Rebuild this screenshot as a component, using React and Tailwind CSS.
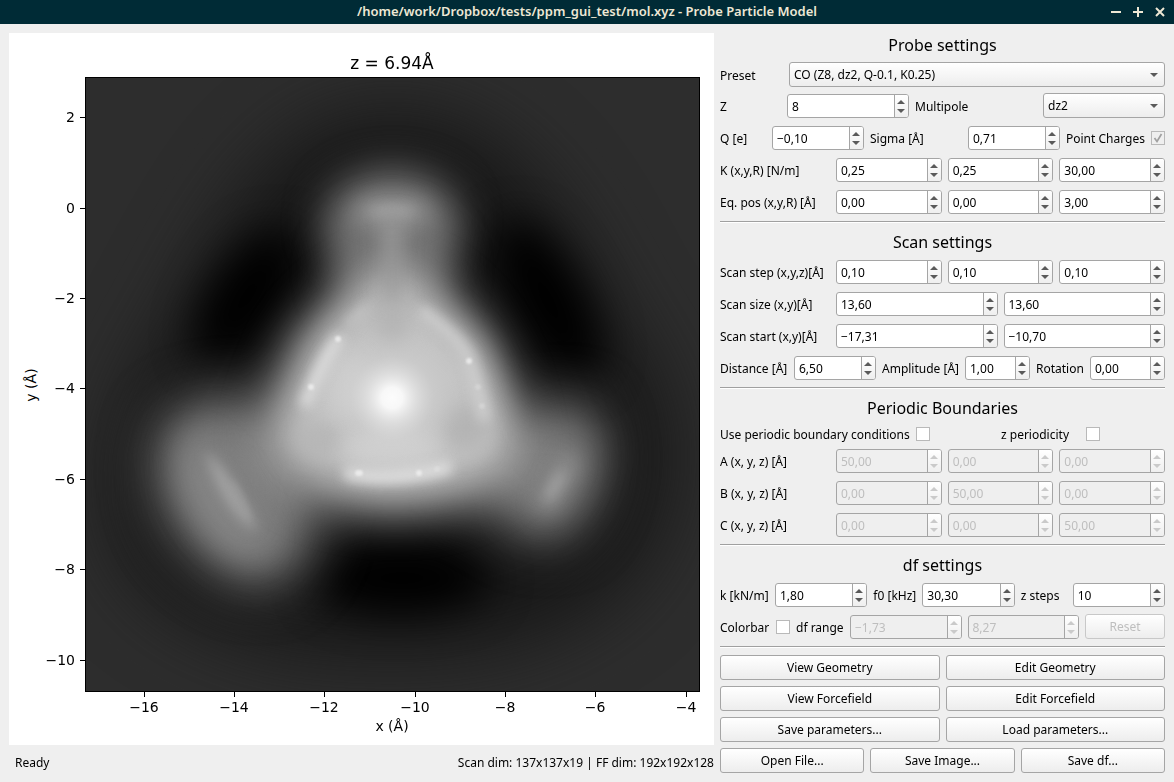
import { useState } from 'react';
import clsx from 'clsx';

const X_TICKS = [[-16, 144], [-14, 234], [-12, 324], [-10, 415], [-8, 505], [-6, 595], [-4, 686]];
const Y_TICKS = [[2, 117], [0, 208], [-2, 298], [-4, 388], [-6, 479], [-8, 569], [-10, 660]];

const fmt = (n) => String(n).replace('-', '−');

function Arrow({ up }) {
  return (
    <svg viewBox="0 0 8 4" className="h-1 w-2" fill="currentColor" aria-hidden="true">
      <path d={up ? 'M0 4 L4 0 L8 4 Z' : 'M0 0 L8 0 L4 4 Z'} />
    </svg>
  );
}

function WindowIcon({ d }) {
  return (
    <svg viewBox="0 0 10 10" className="size-[10px]" fill="none" stroke="currentColor" strokeWidth="2" aria-hidden="true">
      <path d={d} />
    </svg>
  );
}

function Spin({ id, label, value, disabled }) {
  const [text, setText] = useState(value);
  const step = (dir) => {
    const digits = text.includes(',') ? 2 : 0;
    const next = parseFloat(text.replace('−', '-').replace(',', '.')) + dir * (digits ? 0.1 : 1);
    setText(next.toFixed(digits).replace('-', '−').replace('.', ','));
  };

  return (
    <div
      className={clsx(
        'flex h-6 min-w-0 overflow-hidden rounded-[3px] border border-[#a5a5a5]',
        disabled ? 'bg-[#efefef] text-[#bebebe]' : 'bg-white text-black'
      )}
    >
      <input
        id={id}
        aria-label={label}
        type="text"
        value={text}
        disabled={disabled}
        onChange={(e) => setText(e.target.value)}
        className="w-full min-w-0 flex-1 bg-transparent pt-[2px] pl-1 outline-none"
      />
      <div
        className={clsx(
          'flex w-[14px] shrink-0 flex-col border-l border-[#a5a5a5] bg-linear-to-b from-white to-[#efefef] pr-px',
          disabled ? 'text-[#cacaca]' : 'text-[#5a5a5a]'
        )}
      >
        <button type="button" aria-label="Increase" disabled={disabled} onClick={() => step(1)} className="flex flex-1 items-end justify-center pb-[2px]">
          <Arrow up />
        </button>
        <button type="button" aria-label="Decrease" disabled={disabled} onClick={() => step(-1)} className="flex flex-1 items-start justify-center pt-[3px]">
          <Arrow />
        </button>
      </div>
    </div>
  );
}

function Combo({ id, options }) {
  return (
    <div className="relative h-[25px] self-end">
      <select id={id} className="h-full w-full appearance-none rounded-[3px] border border-[#a5a5a5] bg-linear-to-b from-white to-[#ededed] pr-6 pl-1 outline-none">
        {options.map((o) => <option key={o}>{o}</option>)}
      </select>
      <span className="pointer-events-none absolute inset-y-0 right-[7px] flex items-center text-[#5a5a5a]">
        <Arrow />
      </span>
    </div>
  );
}

function Check({ id, checked: initial = false, disabled }) {
  const [checked, setChecked] = useState(initial);
  return (
    <span className="relative flex size-[14px]">
      <input
        id={id}
        type="checkbox"
        checked={checked}
        disabled={disabled}
        onChange={(e) => setChecked(e.target.checked)}
        className="size-[14px] appearance-none border border-[#b9b9b9] bg-white disabled:bg-[#efefef]"
      />
      {checked && (
        <svg viewBox="0 0 14 14" className="pointer-events-none absolute inset-0" fill="none" stroke="#a0a0a0" strokeWidth="1.7">
          <path d="M3.5 7 L6 10.5 L10.5 3" />
        </svg>
      )}
    </span>
  );
}

function PushButton({ children, disabled }) {
  return (
    <button
      type="button"
      disabled={disabled}
      className="h-[25px] self-end rounded-[3px] border border-[#a5a5a5] bg-linear-to-b from-white to-[#ededed] active:to-[#dddddd] disabled:border-[#c8c8c8] disabled:text-[#bebebe]"
    >
      {children}
    </button>
  );
}

function Section({ title, first, children }) {
  return (
    <section className={clsx('border-b border-[#a0a0a0] pb-[7px] shadow-[0_1px_0_#ffffff]', first ? 'pt-[9px]' : 'pt-2')}>
      <h2 className={clsx('text-center text-[16px] leading-6', first ? 'mb-[5px]' : 'mb-[6px]')}>{title}</h2>
      <div className="flex flex-col gap-2 [&_label]:pt-[2px]">{children}</div>
    </section>
  );
}

// One label followed by two or three values that share it
function VectorRow({ label, name, values, disabled }) {
  return (
    <div role="group" aria-label={label} className="grid grid-cols-[110px_1fr] items-center gap-[6px]">
      <label htmlFor={`${name}-0`} className="whitespace-nowrap">{label}</label>
      <div className={clsx('grid gap-[6px]', values.length === 3 ? 'grid-cols-3' : 'grid-cols-2')}>
        {values.map((v, i) => (
          <Spin key={i} id={`${name}-${i}`} label={`${label} ${i + 1}`} value={v} disabled={disabled} />
        ))}
      </div>
    </div>
  );
}

function ScanImage() {
  return (
    <g clipPath="url(#axes)">
      <rect x="85" y="77" width="615" height="615" fill="#2d2d2d" />

      {/* wide attractive halo */}
      <path d="M392 110 C515 110 570 220 620 320 C690 400 690 510 625 585 C555 650 460 658 390 658 C300 658 205 645 145 585 C88 520 105 420 165 330 C220 230 270 110 392 110 Z" fill="#181818" filter="url(#b36)" />

      {/* minima between the lobes */}
      <g fill="#000" filter="url(#b20)">
        <ellipse cx="247" cy="296" rx="76" ry="36" transform="rotate(-56 247 296)" />
        <ellipse cx="548" cy="300" rx="88" ry="36" transform="rotate(62 548 300)" />
        <ellipse cx="402" cy="578" rx="88" ry="36" />
      </g>

      {/* outer lobes */}
      <ellipse cx="392" cy="222" rx="66" ry="50" fill="#7e7e7e" filter="url(#b20)" />
      <ellipse cx="392" cy="270" rx="56" ry="56" fill="#747474" filter="url(#b20)" />
      <path d="M186 412 C230 386 300 400 322 460 C322 530 300 578 262 584 C210 574 170 530 162 490 C154 450 160 424 186 412 Z" fill="#7c7c7c" filter="url(#b28)" />
      <ellipse cx="232" cy="492" rx="40" ry="76" transform="rotate(-30 232 492)" fill="#7c7c7c" filter="url(#b20)" />
      <path d="M480 420 L576 404 C608 436 600 484 580 514 C560 546 528 540 506 516 L450 490 Z" fill="#7e7e7e" filter="url(#b28)" />
      <ellipse cx="556" cy="474" rx="26" ry="52" transform="rotate(26 556 474)" fill="#7c7c7c" filter="url(#b20)" />

      {/* central plateau */}
      <path d="M392 262 C430 270 486 318 502 364 C516 396 524 440 526 458 C494 498 440 514 392 514 C345 514 288 494 260 455 C260 420 275 380 295 338 C318 306 360 270 392 262 Z" fill="#a2a2a2" filter="url(#b20)" />
      <path d="M392 276 L332 332 C310 365 292 406 288 436 C298 462 335 482 392 484 C440 484 484 470 504 452 C500 410 490 372 474 346 Z" fill="#bcbcbc" filter="url(#b16)" />
      <path d="M392 300 L342 345 C325 370 312 400 306 426 C316 450 342 468 392 470 C436 470 468 462 488 444 C484 410 478 380 462 356 Z" fill="#c4c4c4" filter="url(#b10)" />
      <ellipse cx="392" cy="316" rx="20" ry="30" fill="#b5b5b5" filter="url(#b10)" />
      <ellipse cx="318" cy="440" rx="24" ry="18" fill="#b6b6b6" filter="url(#b10)" />
      <ellipse cx="466" cy="428" rx="24" ry="24" fill="#b4b4b4" filter="url(#b10)" />
      <ellipse cx="392" cy="450" rx="48" ry="20" fill="#cecece" filter="url(#b10)" />
      <ellipse cx="346" cy="385" rx="22" ry="32" fill="#cbcbcb" filter="url(#b10)" />

      {/* plateau rims */}
      <g fill="none" strokeLinecap="round" filter="url(#b6)">
        <path d="M366 308 L350 324" stroke="#c4c4c4" strokeWidth="9" />
        <path d="M338 340 C322 362 312 388 306 402" stroke="#dcdcdc" strokeWidth="12" />
        <path d="M424 312 C444 328 458 338 468 356 C475 378 480 396 484 416" stroke="#cfcfcf" strokeWidth="11" />
        <path d="M350 474 C375 479 410 478 446 468" stroke="#dedede" strokeWidth="13" />
      </g>

      {/* ridges on the lobes */}
      <ellipse cx="392" cy="212" rx="36" ry="14" fill="#929292" filter="url(#b10)" />
      <ellipse cx="392" cy="211" rx="22" ry="4" fill="#a6a6a6" filter="url(#b6)" />
      <path d="M392 216 L392 300" stroke="#9a9a9a" strokeWidth="18" filter="url(#b10)" />
      <path d="M186 440 C225 450 245 490 260 530 C262 548 256 556 246 552 C220 545 196 516 186 480 Z" fill="#8a8a8a" fillOpacity="0.7" filter="url(#b16)" />
      <path d="M206 452 C230 472 245 500 257 530 C238 524 215 490 206 452 Z" fill="#a2a2a2" filter="url(#b6)" />
      <path d="M232 482 C240 494 245 506 249 518" fill="none" stroke="#a4a4a4" strokeWidth="4" strokeOpacity="0.5" filter="url(#b3)" />
      <path d="M571 458 L543 508" stroke="#969696" strokeWidth="16" filter="url(#b10)" />
      <path d="M562 474 L548 498" stroke="#a6a6a6" strokeWidth="7" filter="url(#b6)" />

      {/* centre peak and relaxation artefacts */}
      <circle cx="392" cy="398" r="70" fill="url(#peak)" />
      <g fill="#f0f0f0" fillOpacity="0.8" filter="url(#b1)">
        <circle cx="338" cy="339" r="3" />
        <circle cx="311" cy="387" r="3" />
        <circle cx="469" cy="361" r="3" />
        <ellipse cx="359" cy="473" rx="4" ry="3" />
        <ellipse cx="419" cy="473" rx="3" ry="3" />
        <circle cx="437" cy="469" r="3" fillOpacity="0.3" />
        <circle cx="478" cy="387" r="3" fillOpacity="0.3" />
        <circle cx="482" cy="406" r="3" fillOpacity="0.3" />
      </g>
    </g>
  );
}

function Plot() {
  return (
    <svg viewBox="9 33 705 712" className="block h-auto w-full bg-white" role="img" aria-label="Frequency shift map" fontFamily="'DejaVu Sans', sans-serif" fontSize="14">
      <defs>
        <clipPath id="axes"><rect x="85" y="77" width="615" height="615" /></clipPath>
        {[1, 3, 6, 10, 16, 20, 28, 36].map((s) => (
          <filter key={s} id={`b${s}`} x="85" y="77" width="615" height="615" filterUnits="userSpaceOnUse" colorInterpolationFilters="sRGB">
            <feGaussianBlur stdDeviation={s} />
          </filter>
        ))}
        <radialGradient id="peak">
          <stop offset="0" stopColor="#fcfcfc" />
          <stop offset="0.15" stopColor="#f9f9f9" stopOpacity="0.97" />
          <stop offset="0.35" stopColor="#e8e8e8" stopOpacity="0.7" />
          <stop offset="0.6" stopColor="#d8d8d8" stopOpacity="0.3" />
          <stop offset="1" stopColor="#cccccc" stopOpacity="0" />
        </radialGradient>
      </defs>

      <ScanImage />
      <rect x="85.5" y="77.5" width="614" height="614" fill="none" stroke="#000" />

      <g stroke="#000">
        {X_TICKS.map(([v, x]) => <path key={v} d={`M${x + 0.5} 692 v5`} />)}
        {Y_TICKS.map(([v, y]) => <path key={v} d={`M80 ${y + 0.5} h5`} />)}
      </g>
      <g textAnchor="middle">
        {X_TICKS.map(([v, x]) => <text key={v} x={x} y="712">{fmt(v)}</text>)}
        <text x="392" y="69" fontSize="17">z = 6.94Å</text>
        <text x="392" y="731">x (Å)</text>
        <text transform="translate(36 385) rotate(-90)">y (Å)</text>
      </g>
      <g textAnchor="end">
        {Y_TICKS.map(([v, y]) => <text key={v} x="75" y={y + 5}>{fmt(v)}</text>)}
      </g>
    </svg>
  );
}

export default function App() {
  return (
    <div className="flex min-h-screen flex-col bg-[#efefef] font-['Noto_Sans',sans-serif] text-[12px] text-black">
      <header className="relative flex h-6 items-center justify-center bg-[#002b36] text-[#eee8d5]">
        <h1 className="text-[13px] font-semibold">/home/work/Dropbox/tests/ppm_gui_test/mol.xyz - Probe Particle Model</h1>
        <div className="absolute right-[9px] flex gap-3">
          <button type="button" aria-label="Minimize"><WindowIcon d="M0 5 H10" /></button>
          <button type="button" aria-label="Maximize"><WindowIcon d="M0 5 H10 M5 0 V10" /></button>
          <button type="button" aria-label="Close"><WindowIcon d="M1 1 L9 9 M9 1 L1 9" /></button>
        </div>
      </header>

      <main className="grid flex-1 grid-cols-[1fr_445px] gap-[6px] px-[9px]">
        <div className="min-w-0 pt-[9px]">
          <Plot />
          <footer className="flex h-9 items-center justify-between pl-[6px]">
            <span>Ready</span>
            <span>Scan dim: 137x137x19 | FF dim: 192x192x128</span>
          </footer>
        </div>

        <form onSubmit={(e) => e.preventDefault()}>
          <Section title="Probe settings" first>
            <div className="grid h-6 grid-cols-[63px_1fr] items-center gap-[6px]">
              <label htmlFor="preset">Preset</label>
              <Combo id="preset" options={['CO (Z8, dz2, Q-0.1, K0.25)', 'Xe (Z54, s, Q0.3, K0.25)']} />
            </div>
            <div className="grid grid-cols-[61px_1fr_122px_1fr] grid-rows-[24px] items-center gap-[6px]">
              <label htmlFor="z">Z</label>
              <Spin id="z" value="8" />
              <label htmlFor="multipole">Multipole</label>
              <Combo id="multipole" options={['dz2', 's', 'pz']} />
            </div>
            <div className="grid grid-cols-[46px_1fr_92px_1fr_79px_14px] items-center gap-[6px] whitespace-nowrap">
              <label htmlFor="q">Q [e]</label>
              <Spin id="q" value="−0,10" />
              <label htmlFor="sigma">Sigma [Å]</label>
              <Spin id="sigma" value="0,71" />
              <label htmlFor="point-charges">Point Charges</label>
              <Check id="point-charges" checked disabled />
            </div>
            <VectorRow label="K (x,y,R) [N/m]" name="k" values={['0,25', '0,25', '30,00']} />
            <VectorRow label="Eq. pos (x,y,R) [Å]" name="eq" values={['0,00', '0,00', '3,00']} />
          </Section>

          <Section title="Scan settings">
            <VectorRow label="Scan step (x,y,z)[Å]" name="step" values={['0,10', '0,10', '0,10']} />
            <VectorRow label="Scan size (x,y)[Å]" name="size" values={['13,60', '13,60']} />
            <VectorRow label="Scan start (x,y)[Å]" name="start" values={['−17,31', '−10,70']} />
            <div className="grid grid-cols-[68px_82fr_77px_65fr_48px_75fr] items-center gap-[6px] whitespace-nowrap">
              <label htmlFor="distance">Distance [Å]</label>
              <Spin id="distance" value="6,50" />
              <label htmlFor="amplitude">Amplitude [Å]</label>
              <Spin id="amplitude" value="1,00" />
              <label htmlFor="rotation">Rotation</label>
              <Spin id="rotation" value="0,00" />
            </div>
          </Section>

          <Section title="Periodic Boundaries">
            <div className="-mt-[2px] grid h-[17px] grid-cols-[190px_79px_79px_1fr] items-center gap-[6px] whitespace-nowrap">
              <label htmlFor="pbc">Use periodic boundary conditions</label>
              <Check id="pbc" />
              <label htmlFor="pbcz">z periodicity</label>
              <Check id="pbcz" />
            </div>
            <VectorRow label="A (x, y, z) [Å]" name="a" values={['50,00', '0,00', '0,00']} disabled />
            <VectorRow label="B (x, y, z) [Å]" name="b" values={['0,00', '50,00', '0,00']} disabled />
            <VectorRow label="C (x, y, z) [Å]" name="c" values={['0,00', '0,00', '50,00']} disabled />
          </Section>

          <Section title="df settings">
            <div className="grid grid-cols-[49px_1fr_43px_1fr_46px_1fr] items-center gap-[6px] whitespace-nowrap">
              <label htmlFor="stiffness">k [kN/m]</label>
              <Spin id="stiffness" value="1,80" />
              <label htmlFor="f0">f0 [kHz]</label>
              <Spin id="f0" value="30,30" />
              <label htmlFor="zsteps">z steps</label>
              <Spin id="zsteps" value="10" />
            </div>
            <div className="grid grid-cols-[50px_14px_48px_1fr_1fr_80px] grid-rows-[24px] items-center gap-[6px] whitespace-nowrap">
              <label htmlFor="colorbar">Colorbar</label>
              <Check id="colorbar" />
              <label htmlFor="df-min">df range</label>
              <Spin id="df-min" value="−1,73" disabled />
              <Spin id="df-max" label="df range maximum" value="8,27" disabled />
              <PushButton disabled>Reset</PushButton>
            </div>
          </Section>

          <div className="flex flex-col gap-[6px] pt-2 pb-[9px]">
            <div className="grid grid-cols-2 gap-[6px]">
              <PushButton>View Geometry</PushButton>
              <PushButton>Edit Geometry</PushButton>
              <PushButton>View Forcefield</PushButton>
              <PushButton>Edit Forcefield</PushButton>
              <PushButton>Save parameters...</PushButton>
              <PushButton>Load parameters...</PushButton>
            </div>
            <div className="grid grid-cols-3 gap-[6px]">
              <PushButton>Open File...</PushButton>
              <PushButton>Save Image...</PushButton>
              <PushButton>Save df...</PushButton>
            </div>
          </div>
        </form>
      </main>
    </div>
  );
}
